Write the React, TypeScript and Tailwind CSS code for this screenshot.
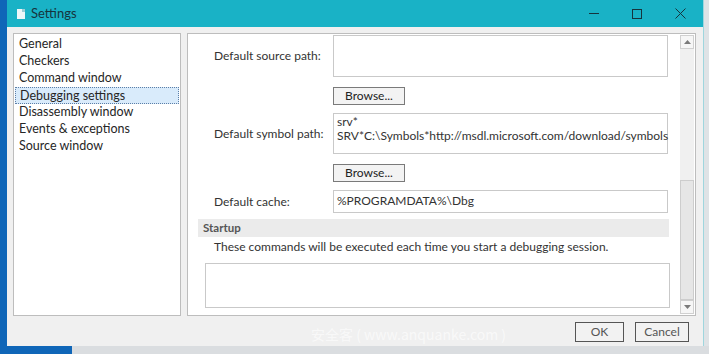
import React from 'react';

const font = { fontFamily: 'Lato, "Open Sans", "Liberation Sans", sans-serif' };

const pages = [
  'General',
  'Checkers',
  'Command window',
  'Debugging settings',
  'Disassembly window',
  'Events & exceptions',
  'Source window',
];

const BrowseButton = () => (
  <button className="flex h-[18px] w-[72px] items-center justify-center border border-[#7a7a7a] bg-[#f3f3f3] text-[12px] leading-none text-[#222]">
    Browse...
  </button>
);

const Field = ({ label, h, children }: { label: string; h: string; children?: React.ReactNode }) => (
  <div className="flex items-center">
    <div className="w-[145px] pl-[26px] text-[12px] text-[#333]">{label}</div>
    <div className={`${h} w-[335px] border border-[#c9c9c9] bg-white px-[3px] text-[12px] leading-[14px] text-[#333]`}>
      {children}
    </div>
  </div>
);

const App = () => {
  return (
    <div className="flex h-[354px] w-[709px] flex-col overflow-hidden bg-[#dfe3e6]" style={font}>
      <div className="flex h-[346px]">
        {/* desktop strip on the left */}
        <div className="w-[7px] bg-[#0f66b8]" />

        {/* window */}
        <div className="relative flex w-[697px] flex-col border-r border-[#9fd6de] bg-[#f0f0f0]">
          {/* title bar */}
          <div className="flex h-[27px] items-center bg-[#19b2c6] text-[#16343d]">
            <div className="ml-[10px] flex h-[10px] w-[8px] items-start justify-end bg-[#eef7f9]">
              <div className="h-[3px] w-[3px] bg-[#9ccdd6]" />
            </div>
            <span className="ml-[6px] text-[13px]">Settings</span>
            <div className="ml-auto flex items-center">
              <div className="flex w-[42px] justify-center">
                <div className="h-px w-[10px] bg-[#16343d]" />
              </div>
              <div className="flex w-[44px] justify-center">
                <div className="h-[10px] w-[10px] border border-[#16343d]" />
              </div>
              <div className="flex w-[44px] justify-center pr-[2px]">
                <svg width="11" height="11" viewBox="0 0 11 11">
                  <path d="M0.5 0.5 L10.5 10.5 M10.5 0.5 L0.5 10.5" stroke="#16343d" strokeWidth="1" />
                </svg>
              </div>
            </div>
          </div>

          {/* body */}
          <div className="flex gap-[6px] pl-[6px] pt-[6px]">
            {/* page list */}
            <div className="h-[283px] w-[168px] border border-[#bdbdbd] bg-white pt-[2px]">
              {pages.map((p) => (
                <div
                  key={p}
                  className={`mx-[1px] h-[17px] pl-[4px] text-[12.5px] leading-[16px] text-[#262626] ${
                    p === 'Debugging settings' ? 'border border-dotted border-[#5c7fa8] bg-[#d9ebfb] pl-[3px] leading-[15px]' : ''
                  }`}
                >
                  {p}
                </div>
              ))}
            </div>

            {/* settings panel */}
            <div className="flex h-[283px] w-[509px] border border-[#bdbdbd] bg-white">
              <div className="flex flex-1 flex-col pt-[1px]">
                <Field label="Default source path:" h="h-[42px]" />
                <div className="mt-[10px] flex pl-[145px]">
                  <BrowseButton />
                </div>
                <div className="mt-[8px]">
                  <Field label="Default symbol path:" h="h-[41px] pt-[1px]">
                    <div>srv*</div>
                    <div>SRV*C:\Symbols*http://msdl.microsoft.com/download/symbols</div>
                  </Field>
                </div>
                <div className="mt-[10px] flex pl-[145px]">
                  <BrowseButton />
                </div>
                <div className="mt-[8px]">
                  <Field label="Default cache:" h="h-[23px] pt-[3px]">
                    %PROGRAMDATA%\Dbg
                  </Field>
                </div>
                <div className="ml-[10px] mr-[11px] mt-[6px] flex h-[18px] items-center bg-[#ebebeb] pl-[5px] text-[11.5px] font-bold text-[#555]">
                  Startup
                </div>
                <div className="pl-[26px] pt-[1px] text-[12px] leading-[17px] text-[#333]">
                  These commands will be executed each time you start a debugging session.
                </div>
                <div className="ml-[17px] mr-[10px] mt-[8px] h-[45px] border border-[#c9c9c9] bg-white" />
              </div>

              {/* scrollbar */}
              <div className="my-[1px] mr-[1px] flex w-[14px] flex-col bg-[#f0f0f0]">
                <div className="flex h-[14px] items-center justify-center border border-[#d0d0d0] bg-[#f6f6f6]">
                  <svg width="7" height="4" viewBox="0 0 7 4">
                    <path d="M0 4 L3.5 0 L7 4 Z" fill="#7a7a7a" />
                  </svg>
                </div>
                <div className="flex-1" />
                <div className="h-[120px] border border-[#cdcdcd] bg-[#e6e6e6]" />
                <div className="flex h-[14px] items-center justify-center border border-[#d0d0d0] bg-[#f6f6f6]">
                  <svg width="7" height="4" viewBox="0 0 7 4">
                    <path d="M0 0 L3.5 4 L7 0 Z" fill="#7a7a7a" />
                  </svg>
                </div>
              </div>
            </div>
          </div>

          {/* buttons */}
          <div className="flex justify-end gap-[11px] pr-[14px] pt-[6px]">
            <button className="h-[20px] w-[49px] border border-[#555] bg-[#f2f2f2] text-[12px] leading-none text-[#555]">
              OK
            </button>
            <button className="h-[20px] w-[54px] border border-[#555] bg-[#f2f2f2] text-[12px] leading-none text-[#555]">
              Cancel
            </button>
          </div>

          {/* watermark */}
          <div
            className="pointer-events-none absolute left-[304px] top-[324px] text-[14px] text-white/60"
            style={{ fontFamily: '"Noto Sans CJK SC", Lato, sans-serif' }}
          >
            安全客 ( www.anquanke.com )
          </div>
        </div>
      </div>

      {/* taskbar strip below */}
      <div className="flex flex-1">
        <div className="w-[72px] bg-[#0f66b8]" />
        <div className="flex-1 bg-[#dadde0]" />
      </div>
    </div>
  );
};

export default App;
